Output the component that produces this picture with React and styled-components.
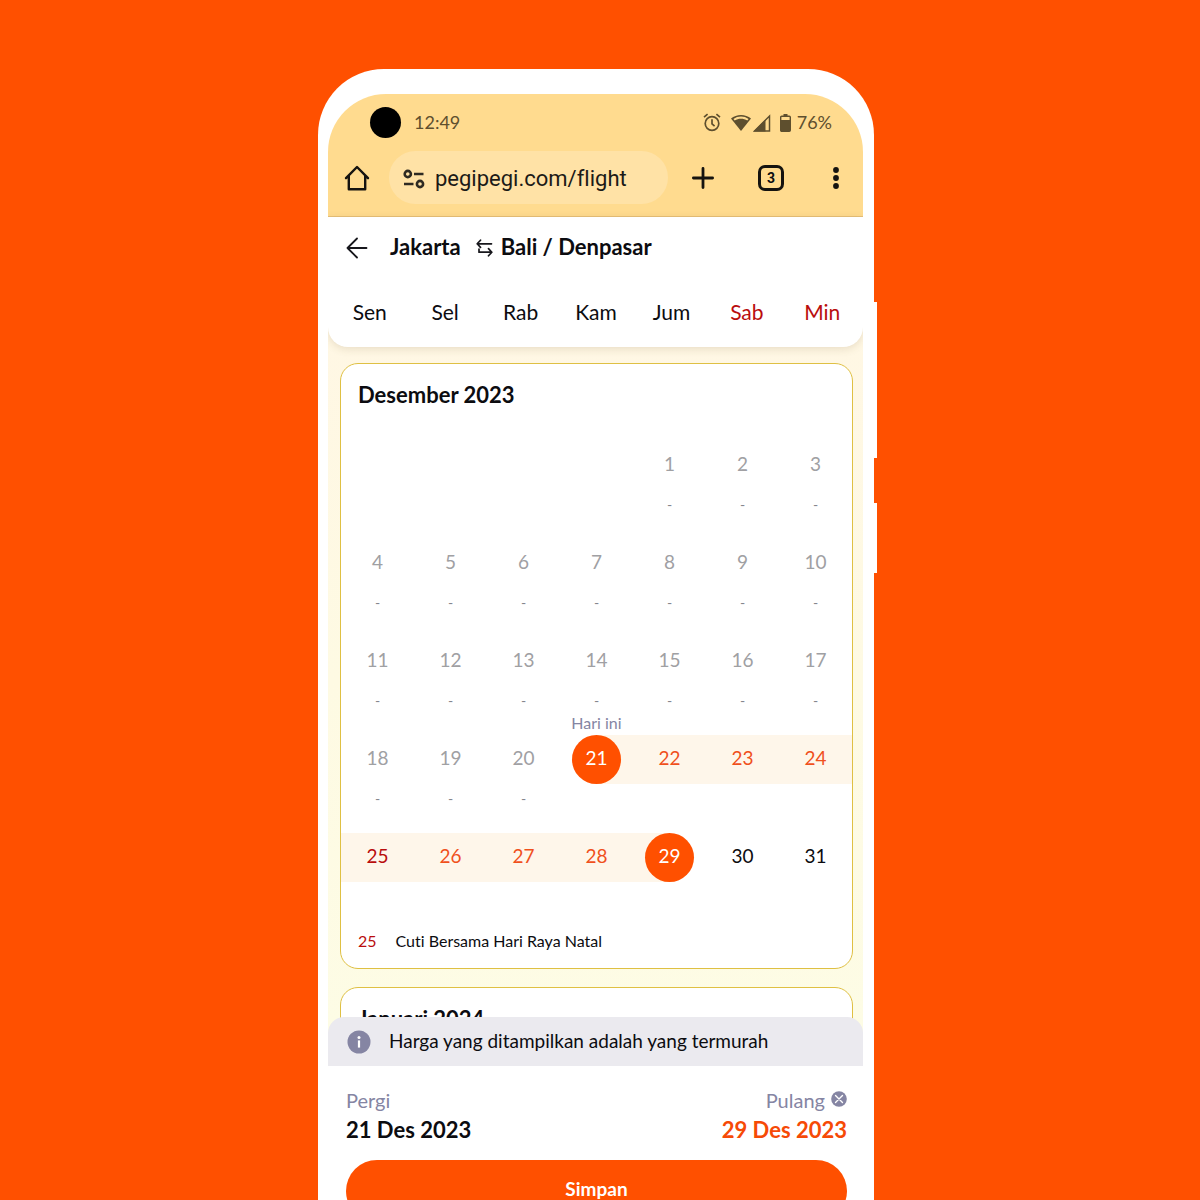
import React from "react";
import styled, { createGlobalStyle, css } from "styled-components";

const ORANGE = "#ff5000";
const RED = "#b90d0d";
const MUTED = "#8585a3";

const GlobalStyle = createGlobalStyle`
  *, *::before, *::after { box-sizing: border-box; }
  body {
    margin: 0;
    background: ${ORANGE};
    color: #0c0c10;
    font-family: Lato, "Open Sans", sans-serif;
    font-variant-ligatures: none;
  }
  button {
    margin: 0;
    padding: 0;
    border: 0;
    background: none;
    color: inherit;
    font: inherit;
    font-variant-ligatures: none;
    cursor: pointer;
  }
  button:disabled { cursor: default; }
  svg { display: block; flex: none; }
`;

const Stage = styled.div`
  height: 100vh;
  overflow: hidden;
  display: flex;
  flex-direction: column;
  align-items: center;
  padding: 69px 8px 0 0;
`;

const Phone = styled.div`
  position: relative;
  flex: none;
  width: 100%;
  max-width: 556px;
  height: calc(100vh - 9px);
  padding: 25px 11px 0 10px;
  background: #fff;
  border-radius: 66px 66px 0 0;
`;

const SideKey = styled.span`
  position: absolute;
  right: -3px;
  top: ${(p) => p.$top}px;
  width: 4px;
  height: ${(p) => p.$length}px;
  background: #fff;
`;

const Screen = styled.div`
  height: 100%;
  display: flex;
  flex-direction: column;
  overflow: hidden;
  border-radius: 58px 58px 0 0;
  background: #fff;
`;

const BrowserChrome = styled.header`
  flex: none;
  background: #ffdb8f;
  border-bottom: 1px solid #e6c078;
`;

const StatusBar = styled.div`
  display: flex;
  align-items: center;
  height: 57px;
  padding: 0 31px 0 42px;
  color: #5e4f2e;
  font-size: 18px;
  line-height: 24px;
`;

const CameraHole = styled.span`
  width: 31px;
  height: 31px;
  margin-right: 13px;
  border-radius: 50%;
  background: #000;
`;

const StatusText = styled.span`
  padding-bottom: 2px;
`;

const StatusIcons = styled.div`
  display: flex;
  align-items: center;
  margin-left: auto;
`;

const StatusGlyph = styled.span`
  margin-left: ${(p) => p.$gap}px;
`;

const BatteryLevel = styled(StatusText)`
  margin-left: 6px;
`;

const AddressRow = styled.div`
  display: flex;
  align-items: center;
  height: 65px;
  padding: 0 18px 12px 16px;
`;

const AddressPill = styled.button`
  flex: 1;
  display: flex;
  align-items: center;
  gap: 10px;
  height: 53px;
  margin: 0 22px 0 19px;
  padding: 2px 0 0 14px;
  border-radius: 27px;
  background: #ffe2a6;
  color: #1c1a17;
  font-family: Roboto, sans-serif;
  font-size: 22px;
  line-height: 28px;
`;

const ToolButton = styled.button`
  display: flex;
  justify-content: center;
  width: 26px;
  margin-right: ${(p) => p.$after || 0}px;
`;

const TabCount = styled.button`
  width: 26px;
  height: 26px;
  margin-right: 43px;
  border: 3px solid #15130f;
  border-radius: 7px;
  font-family: Roboto, sans-serif;
  font-size: 14px;
  font-weight: 700;
  line-height: 20px;
`;

const MoreButton = styled.button`
  display: flex;
  justify-content: center;
  width: 18px;
`;

const AppHeader = styled.div`
  position: relative;
  z-index: 1;
  flex: none;
  height: 130px;
  background: #fff;
  border-radius: 0 0 20px 20px;
  box-shadow: 0 2px 8px rgba(110, 90, 40, 0.16);
`;

const RouteRow = styled.div`
  display: flex;
  align-items: center;
  height: 60px;
  padding: 2px 18px 0;
`;

const RouteTitle = styled.h1`
  display: flex;
  align-items: center;
  margin: 0 0 2px 22px;
  font-size: 22px;
  font-weight: 700;
  line-height: 28px;
`;

const SwapIcon = styled.svg`
  margin: 2px 8px 0 15px;
`;

const Weekdays = styled.div`
  display: grid;
  grid-template-columns: repeat(7, 1fr);
  padding: 20px 3px 0 4px;
  font-size: 21px;
  line-height: 30px;
  text-align: center;
`;

const Weekday = styled.span`
  color: ${(p) => (p.$weekend ? RED : "inherit")};
`;

const CalendarScroll = styled.main`
  flex: 1;
  min-height: 0;
  margin-top: -20px;
  padding: 36px 10px 0 12px;
  overflow: hidden;
  display: flex;
  flex-direction: column;
  gap: 18px;
  background: linear-gradient(#fff7e4, #fefae3 50%, #fdfce5);
`;

const MonthCard = styled.section`
  flex: none;
  overflow: hidden;
  border: 1px solid #dfc043;
  border-radius: 18px;
  background: #fff;
`;

const MonthTitle = styled.h2`
  margin: 0;
  padding: 16px 17px 7px;
  font-size: 22px;
  font-weight: 700;
  line-height: 30px;
`;

const DayTable = styled.table`
  width: 100%;
  table-layout: fixed;
  border-collapse: collapse;
`;

const DayCell = styled.td`
  height: 98px;
  padding: 0;
  vertical-align: top;
  text-align: center;
`;

const CellNote = styled.div`
  height: 24px;
  color: ${MUTED};
  font-size: 16px;
  line-height: 24px;
`;

const TINT = "#fef6ea";
const bands = {
  full: css`background: ${TINT};`,
  start: css`background: linear-gradient(to right, transparent 50%, ${TINT} 50%);`,
  end: css`background: linear-gradient(to left, transparent 50%, ${TINT} 50%);`,
};

const DayBand = styled.div`
  display: flex;
  justify-content: center;
  ${(p) => bands[p.$band]}
`;

const tones = {
  past: "#a0a0a3",
  open: "#0c0c10",
  range: "#f0501c",
  holiday: RED,
  selected: "#fff",
};

const DayButton = styled.button`
  width: 49px;
  height: 49px;
  padding-bottom: 4px;
  border-radius: 50%;
  background: ${(p) => (p.$tone === "selected" ? ORANGE : "transparent")};
  color: ${(p) => tones[p.$tone]};
  font-size: 19px;
  line-height: 24px;
`;

const Price = styled.div`
  height: 25px;
  color: #85858c;
  font-size: 14px;
  line-height: 30px;
`;

const Holiday = styled.p`
  display: flex;
  gap: 19px;
  margin: 0;
  padding: 22px 17px 15px;
  font-size: 16px;
  line-height: 24px;
`;

const HolidayDate = styled.span`
  color: ${RED};
`;

const Notice = styled.div`
  position: relative;
  z-index: 1;
  flex: none;
  display: flex;
  align-items: center;
  gap: 18px;
  height: 49px;
  margin-top: -16px;
  padding: 0 19px;
  border-radius: 16px 16px 0 0;
  background: #ebeaef;
  font-size: 19px;
  line-height: 26px;
`;

const NoticeText = styled.span`
  padding-bottom: 2px;
`;

const Footer = styled.footer`
  flex: none;
  padding: 20px 16px 38px 18px;
`;

const TripDates = styled.div`
  display: flex;
  justify-content: space-between;
  margin-bottom: 14px;
`;

const TripDate = styled.div`
  text-align: ${(p) => (p.$active ? "right" : "left")};
`;

const TripLabel = styled.div`
  display: flex;
  align-items: center;
  justify-content: ${(p) => (p.$active ? "flex-end" : "flex-start")};
  gap: 6px;
  color: ${MUTED};
  font-size: 20px;
  line-height: 28px;
`;

const ClearButton = styled.button`
  padding-bottom: 2px;
`;

const TripValue = styled.div`
  color: ${(p) => (p.$active ? "#f64a06" : "inherit")};
  font-size: 22px;
  font-weight: 700;
  line-height: 32px;
`;

const SaveButton = styled.button`
  width: 100%;
  height: 62px;
  padding-bottom: 4px;
  border-radius: 31px;
  background: ${ORANGE};
  color: #fff;
  font-size: 19px;
  font-weight: 700;
  line-height: 24px;
`;

const AlarmIcon = () => (
  <svg width="18" height="20" viewBox="0 0 18 20" fill="none" stroke="currentColor" strokeWidth="1.7">
    <circle cx="9" cy="10.500" r="6.800" />
    <path d="M9 6.300v4.500l2.600 2.400M1 4.200 4.600 1.200M17 4.200l-3.600-3" />
  </svg>
);

const WifiIcon = () => (
  <svg width="20" height="18" viewBox="0 0 20 18" fill="currentColor">
    <path d="M10 1C6.200 1 2.800 2.300 0 4.600L10 17 20 4.600C17.200 2.300 13.800 1 10 1Z" />
    <path d="M2.400 5C4.700 3.300 7.200 2.500 10 2.500s5.300.8 7.600 2.500l-1.300 1.600C14.400 5.300 12.300 4.700 10 4.700s-4.400.6-6.300 1.900Z" fill="#ffdb8f" />
  </svg>
);

const SignalIcon = () => (
  <svg width="18" height="18" viewBox="0 0 18 18">
    <path d="M1.500 17 16.500 2v15Z" fill="none" stroke="currentColor" strokeWidth="1.500" />
    <path d="M.5 17.600 12.500 5.500v12.100Z" fill="currentColor" />
  </svg>
);

const BatteryIcon = () => (
  <svg width="11" height="18" viewBox="0 0 11 18">
    <path d="M3.500 0h4v2h-4Z" fill="currentColor" />
    <rect x=".7" y="2.300" width="9.600" height="15" rx="1" fill="none" stroke="currentColor" strokeWidth="1.400" />
    <path d="M1 6h9v11H1Z" fill="currentColor" />
  </svg>
);

const HomeIcon = () => (
  <svg width="26" height="26" viewBox="0 0 26 26" fill="none" stroke="#15130f" strokeWidth="2.400" strokeLinejoin="round" strokeLinecap="round">
    <path d="M2 13.200 13 2l11 11.200M4.800 11v13.200h16.400V11" />
  </svg>
);

const TuneIcon = () => (
  <svg width="22" height="20" viewBox="0 0 22 20" fill="none" stroke="#2e2a22" strokeWidth="2.600">
    <circle cx="4.800" cy="5" r="3.100" />
    <circle cx="17" cy="15" r="3.100" />
    <path d="M11 5h9.500M1 15h9.500" />
  </svg>
);

const PlusIcon = () => (
  <svg width="24" height="24" viewBox="0 0 24 24" fill="none" stroke="#15130f" strokeWidth="2.800" strokeLinecap="round">
    <path d="M12 2.400v19.200M2.400 12h19.200" />
  </svg>
);

const MoreIcon = () => (
  <svg width="8" height="24" viewBox="0 0 8 24" fill="#15130f">
    <circle cx="4" cy="4" r="2.900" />
    <circle cx="4" cy="12" r="2.900" />
    <circle cx="4" cy="20" r="2.900" />
  </svg>
);

const BackIcon = () => (
  <svg width="22" height="22" viewBox="0 0 22 22" fill="none" stroke="#17171c" strokeWidth="1.800" strokeLinecap="round" strokeLinejoin="round">
    <path d="M11 1.500 1.500 11l9.500 9.500M1.500 11h19" />
  </svg>
);

const InfoIcon = () => (
  <svg width="24" height="24" viewBox="0 0 24 24">
    <circle cx="12" cy="12" r="11.500" fill={MUTED} />
    <circle cx="12" cy="7.400" r="1.500" fill="#fff" />
    <path d="M12 10.400v7.200" stroke="#fff" strokeWidth="2.200" />
  </svg>
);

const ClearIcon = () => (
  <svg width="16" height="16" viewBox="0 0 16 16">
    <circle cx="8" cy="8" r="7.800" fill={MUTED} />
    <path d="m4.500 4.500 7 7m0-7-7 7" stroke="#fff" strokeWidth="1.400" strokeLinecap="round" />
  </svg>
);

const WEEKDAYS = ["Sen", "Sel", "Rab", "Kam", "Jum", "Sab", "Min"];
const TODAY = 21;
const RETURN = 29;
const HOLIDAYS = [25];
const FIRST_COLUMN = 4;

const weeks = Array.from({ length: 5 }, (_, week) =>
  Array.from({ length: 7 }, (_, column) => {
    const day = week * 7 + column - FIRST_COLUMN + 1;
    return day > 0 ? day : null;
  })
);

function toneOf(day) {
  if (day < TODAY) return "past";
  if (day === TODAY || day === RETURN) return "selected";
  if (HOLIDAYS.includes(day)) return "holiday";
  return day < RETURN ? "range" : "open";
}

function bandOf(day) {
  if (day === TODAY) return "start";
  if (day === RETURN) return "end";
  return day > TODAY && day < RETURN ? "full" : undefined;
}

function Day({ day }) {
  if (!day) return <DayCell />;
  const past = day < TODAY;
  return (
    <DayCell>
      <CellNote>{day === TODAY ? "Hari ini" : null}</CellNote>
      <DayBand $band={bandOf(day)}>
        <DayButton type="button" $tone={toneOf(day)} disabled={past}>{day}</DayButton>
      </DayBand>
      <Price>{past ? "-" : null}</Price>
    </DayCell>
  );
}

export default function App() {
  return (
    <Stage>
      <GlobalStyle />
      <Phone>
        <SideKey $top={233} $length={156} />
        <SideKey $top={434} $length={70} />
        <Screen>
          <BrowserChrome>
            <StatusBar>
              <CameraHole />
              <StatusText>12:49</StatusText>
              <StatusIcons>
                <AlarmIcon />
                <StatusGlyph $gap={10}><WifiIcon /></StatusGlyph>
                <StatusGlyph $gap={2}><SignalIcon /></StatusGlyph>
                <StatusGlyph $gap={9}><BatteryIcon /></StatusGlyph>
                <BatteryLevel>76%</BatteryLevel>
              </StatusIcons>
            </StatusBar>
            <AddressRow>
              <ToolButton type="button" aria-label="Home"><HomeIcon /></ToolButton>
              <AddressPill type="button">
                <TuneIcon />
                pegipegi.com/flight
              </AddressPill>
              <ToolButton type="button" aria-label="New tab" $after={42}><PlusIcon /></ToolButton>
              <TabCount type="button">3</TabCount>
              <MoreButton type="button" aria-label="More"><MoreIcon /></MoreButton>
            </AddressRow>
          </BrowserChrome>

          <AppHeader>
            <RouteRow>
              <button type="button" aria-label="Kembali"><BackIcon /></button>
              <RouteTitle>
                Jakarta
                <SwapIcon width="17" height="18" viewBox="0 0 17 18" fill="none" stroke="#17171c" strokeWidth="1.700" strokeLinecap="round" strokeLinejoin="round">
                  <path d="M4.500 1.200 1.200 4.800 4.500 8.400M1.200 4.800H15.500M12.500 9.600l3.300 3.600-3.300 3.600M15.800 13.200H3V10" />
                </SwapIcon>
                Bali / Denpasar
              </RouteTitle>
            </RouteRow>
            <Weekdays>
              {WEEKDAYS.map((name, index) => (
                <Weekday key={name} $weekend={index > 4}>{name}</Weekday>
              ))}
            </Weekdays>
          </AppHeader>

          <CalendarScroll>
            <MonthCard>
              <MonthTitle>Desember 2023</MonthTitle>
              <DayTable aria-label="Desember 2023">
                <tbody>
                  {weeks.map((week, row) => (
                    <tr key={row}>
                      {week.map((day, column) => <Day key={column} day={day} />)}
                    </tr>
                  ))}
                </tbody>
              </DayTable>
              <Holiday>
                <HolidayDate>25</HolidayDate>
                Cuti Bersama Hari Raya Natal
              </Holiday>
            </MonthCard>
            <MonthCard>
              <MonthTitle>Januari 2024</MonthTitle>
            </MonthCard>
          </CalendarScroll>

          <Notice>
            <InfoIcon />
            <NoticeText>Harga yang ditampilkan adalah yang termurah</NoticeText>
          </Notice>

          <Footer>
            <TripDates>
              <TripDate>
                <TripLabel>Pergi</TripLabel>
                <TripValue>21 Des 2023</TripValue>
              </TripDate>
              <TripDate $active>
                <TripLabel $active>
                  Pulang
                  <ClearButton type="button" aria-label="Hapus tanggal pulang"><ClearIcon /></ClearButton>
                </TripLabel>
                <TripValue $active>29 Des 2023</TripValue>
              </TripDate>
            </TripDates>
            <SaveButton type="button">Simpan</SaveButton>
          </Footer>
        </Screen>
      </Phone>
    </Stage>
  );
}
